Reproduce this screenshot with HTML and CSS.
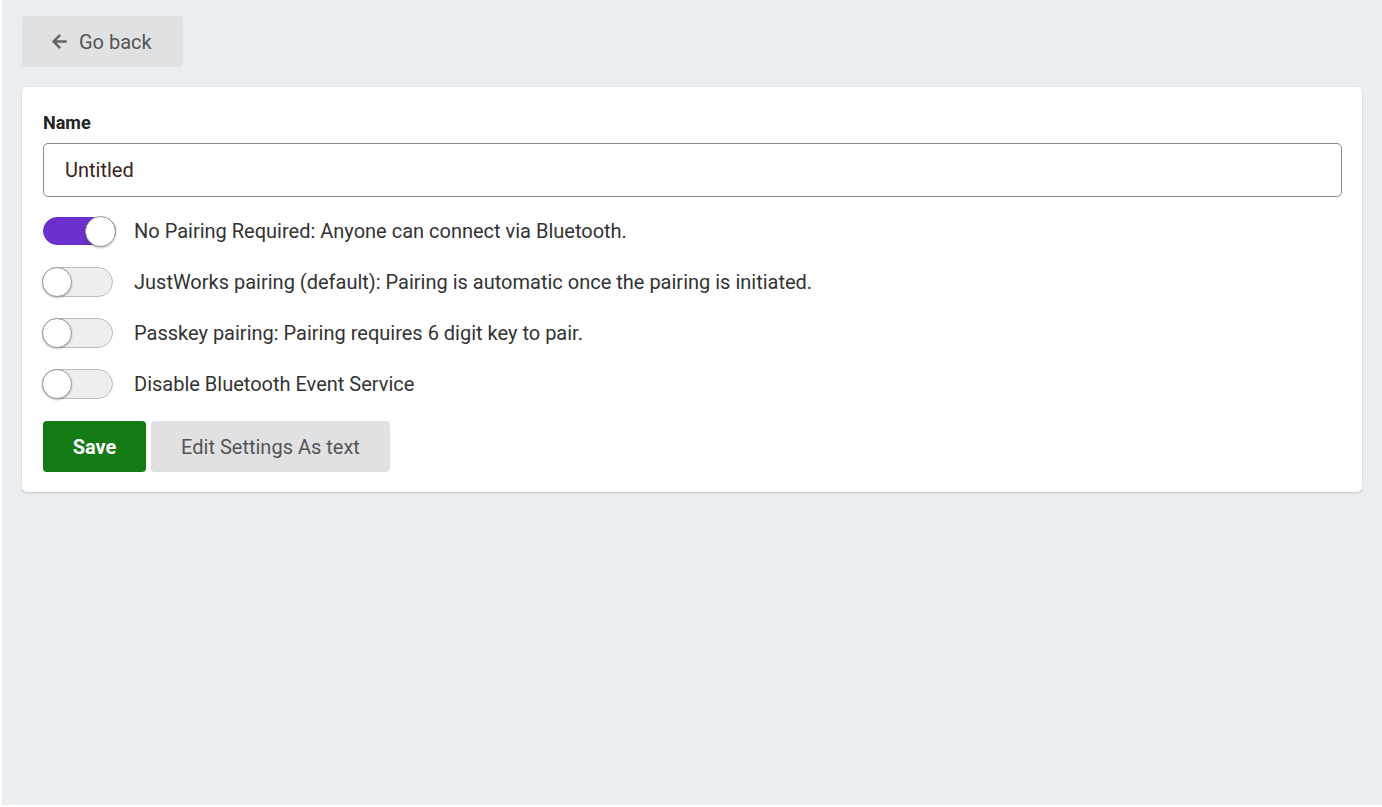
FILE: index.html
```html
<!DOCTYPE html>
<html>

<head>
  <title>Bluetooth Settings</title>
  <link rel="stylesheet" href="styles.css">
</head>

<body>
  <div class="page">
    <button class="back-button">
      <svg class="back-icon" viewBox="0 0 448 512" width="17" height="17">
        <path fill="currentColor" d="M257.5 445.1l-22.2 22.2c-9.4 9.4-24.6 9.4-33.9 0L7 273c-9.4-9.4-9.4-24.6 0-33.9L201.4 44.7c9.4-9.4 24.6-9.4 33.9 0l22.2 22.2c9.5 9.5 9.3 25-.4 34.3L136.6 216H424c13.3 0 24 10.7 24 24v32c0 13.3-10.7 24-24 24H136.6l120.5 114.8c9.8 9.3 10 24.8.4 34.3z"/>
      </svg>
      Go back
    </button>

    <div class="card">
      <label for="name-input" class="field-label">Name</label>
      <input id="name-input" class="text-input" type="text" value="Untitled">

      <div class="toggle-list">
        <label class="toggle-row">
          <span class="toggle on"><span class="knob"></span></span>
          No Pairing Required: Anyone can connect via Bluetooth.
        </label>
        <label class="toggle-row">
          <span class="toggle"><span class="knob"></span></span>
          JustWorks pairing (default): Pairing is automatic once the pairing is initiated.
        </label>
        <label class="toggle-row">
          <span class="toggle"><span class="knob"></span></span>
          Passkey pairing: Pairing requires 6 digit key to pair.
        </label>
        <label class="toggle-row">
          <span class="toggle"><span class="knob"></span></span>
          Disable Bluetooth Event Service
        </label>
      </div>

      <div class="actions">
        <button class="save-button">Save</button>
        <button class="text-button">Edit Settings As text</button>
      </div>
    </div>
  </div>
</body>

</html>
```

FILE: styles.css
```css
html,
body {
  margin: 0;
  padding: 0;
  background-color: #ffffff;
  font-family: Roboto, "Liberation Sans", sans-serif;
}

.page {
  margin-left: 2px;
  height: 805px;
  padding: 16px 20px 0 20px;
  box-sizing: border-box;
  background-color: #ebeef0;
}

button {
  font-family: inherit;
  cursor: pointer;
}

.back-button {
  display: flex;
  align-items: center;
  gap: 11px;
  width: 161px;
  height: 51px;
  padding: 0 0 0 29px;
  border: none;
  border-radius: 4px;
  background-color: #dfe1e3;
  color: #555555;
  font-size: 20px;
}

.back-icon {
  color: #666666;
}

.card {
  margin-top: 20px;
  padding: 25px 20px 20px 21px;
  border-radius: 5px;
  background-color: #ffffff;
  box-shadow: 0 1px 2px rgba(0, 0, 0, 0.18);
}

.field-label {
  display: block;
  font-size: 18px;
  font-weight: bold;
  color: #222222;
  line-height: 22px;
}

.text-input {
  display: block;
  width: 100%;
  box-sizing: border-box;
  height: 54px;
  margin-top: 9px;
  padding: 0 21px;
  border: 1px solid #8a8a8a;
  border-radius: 5px;
  font-family: inherit;
  font-size: 20px;
  color: #3a2222;
}

.toggle-list {
  margin-top: 19px;
  display: flex;
  flex-direction: column;
  gap: 21px;
}

.toggle-row {
  display: flex;
  align-items: center;
  gap: 21px;
  height: 30px;
  font-size: 20px;
  color: #333333;
}

.toggle {
  position: relative;
  box-sizing: border-box;
  width: 71px;
  height: 30px;
  flex-shrink: 0;
  margin-left: -1px;
  border: 1px solid #bdbdbd;
  border-radius: 15px;
  background-color: #eeeeee;
}

.toggle .knob {
  position: absolute;
  top: -1px;
  left: -1px;
  box-sizing: border-box;
  width: 30px;
  height: 30px;
  border: 1px solid #9a9a9a;
  border-radius: 50%;
  background-color: #ffffff;
  box-shadow: 0 1px 2px rgba(0, 0, 0, 0.25);
}

.toggle.on {
  width: 73px;
  height: 28px;
  margin-left: 0;
  margin-right: -3px;
  border-color: #6a2fcc;
  background-color: #6a2fcc;
}

.toggle.on .knob {
  left: auto;
  right: -1px;
  top: -2px;
  width: 31px;
  height: 31px;
}

.actions {
  margin-top: 22px;
  display: flex;
  gap: 5px;
}

.save-button {
  width: 103px;
  height: 51px;
  border: none;
  border-radius: 4px;
  background-color: #137a14;
  color: #ffffff;
  font-size: 20px;
  font-weight: bold;
}

.text-button {
  width: 239px;
  height: 51px;
  border: none;
  border-radius: 4px;
  background-color: #dfe1e3;
  color: #555555;
  font-size: 20px;
}
```
